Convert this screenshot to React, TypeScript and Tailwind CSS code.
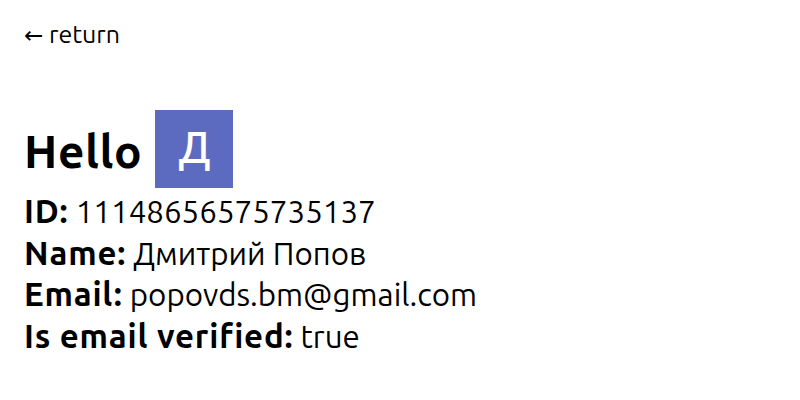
export default function App() {
  return (
    <div className="min-h-[400px] bg-white px-6 pt-[19px] text-black font-['Ubuntu','Noto_Sans',sans-serif]">
      <a href="#" className="block text-[25px] leading-[30px]">
        <span className="font-['DejaVu_Sans',sans-serif] text-[23px]">←</span> return
      </a>
      <div className="mt-[60px] flex items-center gap-[13px]">
        <h1 className="mt-1 text-[46px] font-bold leading-none tracking-[0.6px]">Hello</h1>
        <div className="flex h-[78px] w-[78px] items-center justify-center bg-[#5c6bc0] pb-1 text-[44px] font-medium text-white">
          Д
        </div>
      </div>
      <div className="mt-[3px] text-[31.3px] leading-[41.7px] [&_b]:text-[33px] [&_b]:leading-none [&_b]:tracking-[0.8px]">
        <p>
          <b>ID:</b> 11148656575735137
        </p>
        <p>
          <b>Name:</b> Дмитрий Попов
        </p>
        <p>
          <b>Email:</b> popovds.bm@gmail.com
        </p>
        <p>
          <b>Is email verified:</b> true
        </p>
      </div>
    </div>
  );
}
